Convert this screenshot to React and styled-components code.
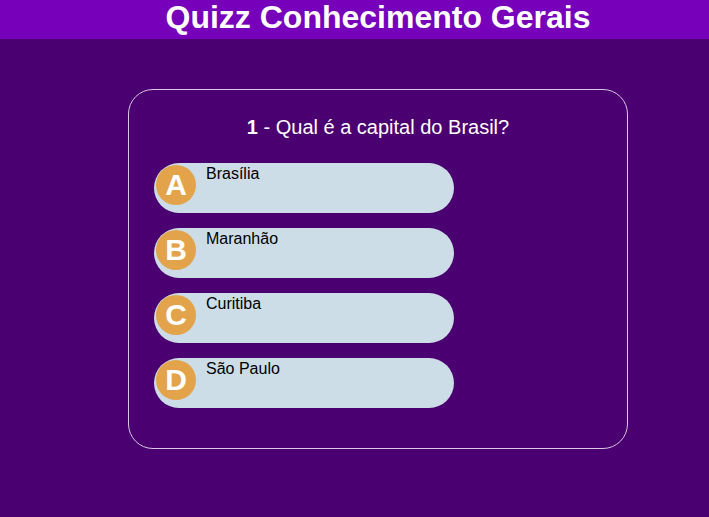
import styled, { createGlobalStyle } from 'styled-components'

const GlobalStyle = createGlobalStyle`
  body {
    margin: 0;
    background-color: #4a0070;
    font-family: "Liberation Sans", Arial, sans-serif;
  }
`

const Header = styled.header`
  height: 39px;
  background-color: #7700bb;
`

const Title = styled.h1`
  width: 500px;
  margin: 0 0 0 128px;
  padding-top: 1px;
  color: #fff;
  font-size: 32px;
  line-height: 32px;
  text-align: center;
`

const Card = styled.section`
  box-sizing: border-box;
  width: 500px;
  height: 360px;
  margin: 50px 0 0 128px;
  padding: 0 25px;
  border: 1px solid #d8c8e4;
  border-radius: 25px;
`

const Question = styled.h2`
  margin: 26px 0 24px;
  color: #fff;
  font-size: 20px;
  font-weight: normal;
  text-align: center;
  b {
    font-weight: bold;
  }
`

const Options = styled.ul`
  display: flex;
  flex-direction: column;
  gap: 15px;
  margin: 0;
  padding: 0;
  list-style: none;
`

const Option = styled.li`
  display: flex;
  align-items: flex-start;
  width: 300px;
  height: 50px;
  border-radius: 25px;
  background-color: #ccdde8;
  cursor: pointer;
`

const Letter = styled.span`
  display: flex;
  align-items: center;
  justify-content: center;
  width: 40px;
  height: 40px;
  margin: 2px 0 0 2px;
  border-radius: 50%;
  background-color: #e3a34a;
  color: #fff;
  font-size: 30px;
  font-weight: bold;
`

const Answer = styled.span`
  margin: 2px 0 0 10px;
  color: #000;
  font-size: 16px;
`

const answers = ['Brasília', 'Maranhão', 'Curitiba', 'São Paulo']
const letters = ['A', 'B', 'C', 'D']

export default function App() {
  return (
    <>
      <GlobalStyle />
      <Header>
        <Title>Quizz Conhecimento Gerais</Title>
      </Header>
      <Card>
        <Question><b>1</b> - Qual é a capital do Brasil?</Question>
        <Options>
          {answers.map((a, i) => (
            <Option key={a}>
              <Letter>{letters[i]}</Letter>
              <Answer>{a}</Answer>
            </Option>
          ))}
        </Options>
      </Card>
    </>
  )
}
